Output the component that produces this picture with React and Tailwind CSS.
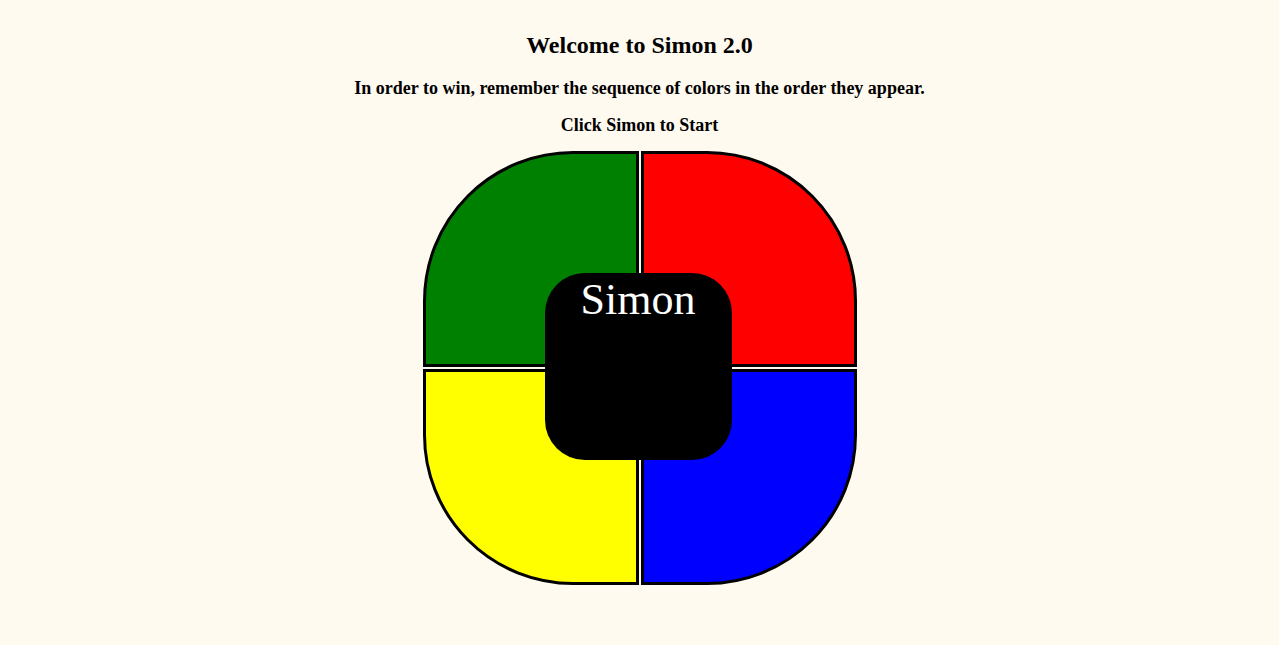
const quadrants = [
  { color: 'bg-[#008000]', shape: 'rounded-tl-[150px]' },
  { color: 'bg-[#ff0000]', shape: 'rounded-tr-[150px]' },
  { color: 'bg-[#ffff00]', shape: 'rounded-bl-[150px]' },
  { color: 'bg-[#0000ff]', shape: 'rounded-br-[150px]' },
]

function Pad({ color, shape }) {
  return <button type="button" className={`h-[216px] w-[216px] border-[3px] border-black ${color} ${shape}`} />
}

export default function App() {
  return (
    <div className="min-h-[645px] w-full bg-[#fffaf0] font-['Liberation_Serif',serif] text-black">
      <div className="flex flex-col items-center pt-[31px]">
        <h2 className="text-[24px] font-bold leading-[28px]">Welcome to Simon 2.0</h2>
        <h3 className="mt-[18px] text-[18px] font-bold leading-[22px]">
          In order to win, remember the sequence of colors in the order they appear.
        </h3>
        <h3 className="mt-[15px] text-[18px] font-bold leading-[22px]">Click Simon to Start</h3>
        <div className="relative mt-[15px] grid grid-cols-[216px_216px] gap-[2px]">
          {quadrants.map((q) => (
            <Pad key={q.color} {...q} />
          ))}
          <div className="absolute left-[122px] top-[122px] flex h-[187px] w-[187px] flex-col items-center rounded-[40px] bg-black pt-[2px]">
            <span className="text-[44px] leading-[50px] text-white">Simon</span>
          </div>
        </div>
      </div>
    </div>
  )
}
